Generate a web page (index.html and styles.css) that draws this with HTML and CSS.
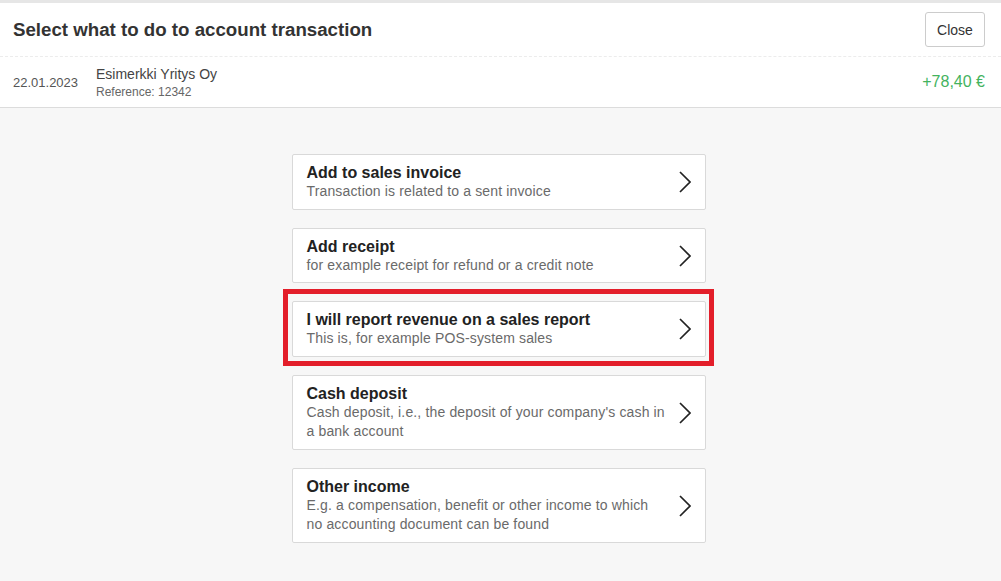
FILE: index.html
```html
<!DOCTYPE html>
<html lang="en">
  <head>
    <meta charset="UTF-8" />
    <title>Account transaction</title>
    <link rel="stylesheet" href="styles.css">
  </head>
  <body>
    <div class="panel">
      <div class="panel-head">
        <h1 class="panel-title">Select what to do to account transaction</h1>
        <button class="close-button">Close</button>
      </div>
      <div class="transaction">
        <div class="transaction-date">22.01.2023</div>
        <div class="transaction-info">
          <div class="transaction-name">Esimerkki Yritys Oy</div>
          <div class="transaction-ref">Reference: 12342</div>
        </div>
        <div class="transaction-amount">+78,40 €</div>
      </div>
    </div>

    <div class="choices">
      <a class="choice" href="#">
        <div class="choice-text">
          <div class="choice-title">Add to sales invoice</div>
          <div class="choice-desc">Transaction is related to a sent invoice</div>
        </div>
        <svg class="chevron" viewBox="0 0 12 22"><polyline points="1,1 11,11 1,21" /></svg>
      </a>

      <a class="choice" href="#">
        <div class="choice-text">
          <div class="choice-title">Add receipt</div>
          <div class="choice-desc">for example receipt for refund or a credit note</div>
        </div>
        <svg class="chevron" viewBox="0 0 12 22"><polyline points="1,1 11,11 1,21" /></svg>
      </a>

      <a class="choice highlighted" href="#">
        <div class="choice-text">
          <div class="choice-title">I will report revenue on a sales report</div>
          <div class="choice-desc">This is, for example POS-system sales</div>
        </div>
        <svg class="chevron" viewBox="0 0 12 22"><polyline points="1,1 11,11 1,21" /></svg>
      </a>

      <a class="choice" href="#">
        <div class="choice-text">
          <div class="choice-title">Cash deposit</div>
          <div class="choice-desc">Cash deposit, i.e., the deposit of your company's cash in a bank account</div>
        </div>
        <svg class="chevron" viewBox="0 0 12 22"><polyline points="1,1 11,11 1,21" /></svg>
      </a>

      <a class="choice" href="#">
        <div class="choice-text">
          <div class="choice-title">Other income</div>
          <div class="choice-desc">E.g. a compensation, benefit or other income to which no accounting document can be found</div>
        </div>
        <svg class="chevron" viewBox="0 0 12 22"><polyline points="1,1 11,11 1,21" /></svg>
      </a>
    </div>
  </body>
</html>
```

FILE: styles.css
```css
body {
  margin: 0;
  font-family: "Liberation Sans", Arial, sans-serif;
  background: #f7f7f7;
  color: #333;
}

.panel {
  background: #fff;
  border-top: 3px solid #e6e6e6;
  border-bottom: 1px solid #dcdcdc;
}
.panel-head {
  display: flex;
  align-items: center;
  justify-content: space-between;
  height: 53px;
  padding: 0 16px 0 13px;
  border-bottom: 1px dashed #ececec;
}
.panel-title {
  margin: 0;
  font-size: 18.7px;
  font-weight: bold;
  color: #333;
}
.close-button {
  height: 35px;
  width: 60px;
  background: #fff;
  border: 1px solid #ccc;
  border-radius: 3px;
  font-family: "Liberation Sans", Arial, sans-serif;
  font-size: 14px;
  color: #333;
  cursor: pointer;
}

.transaction {
  display: flex;
  align-items: center;
  height: 50px;
  padding: 0 16px 0 13px;
}
.transaction-date {
  width: 83px;
  font-size: 13px;
  color: #555;
}
.transaction-info {
  flex: 1;
  padding-top: 2px;
}
.transaction-name {
  font-size: 14px;
  line-height: 18px;
  color: #444;
}
.transaction-ref {
  font-size: 12px;
  line-height: 18px;
  color: #666;
}
.transaction-amount {
  font-size: 16px;
  color: #43b35e;
}

.choices {
  width: 414px;
  margin: 46px 0 0 calc(50% - 209px);
  display: flex;
  flex-direction: column;
  gap: 18px;
}
.choice {
  position: relative;
  display: flex;
  align-items: center;
  padding: 8px 14px 7px 14px;
  background: #fff;
  border: 1px solid #d9d9d9;
  border-radius: 2px;
  text-decoration: none;
  color: #222;
}
.choice-text {
  flex: 1;
  padding-right: 11px;
}
.choice-title {
  font-size: 16px;
  line-height: 19px;
  font-weight: bold;
  color: #222;
}
.choice-desc {
  font-size: 14px;
  line-height: 19.5px;
  letter-spacing: 0.15px;
  color: #6a6a6a;
}
.chevron {
  width: 12px;
  height: 22px;
  flex-shrink: 0;
}
.chevron polyline {
  fill: none;
  stroke: #222;
  stroke-width: 1.7;
}

.highlighted::after {
  content: "";
  position: absolute;
  top: -13px;
  left: -10px;
  right: -9px;
  bottom: -10px;
  border: 5px solid #e31e2a;
  pointer-events: none;
}
```
